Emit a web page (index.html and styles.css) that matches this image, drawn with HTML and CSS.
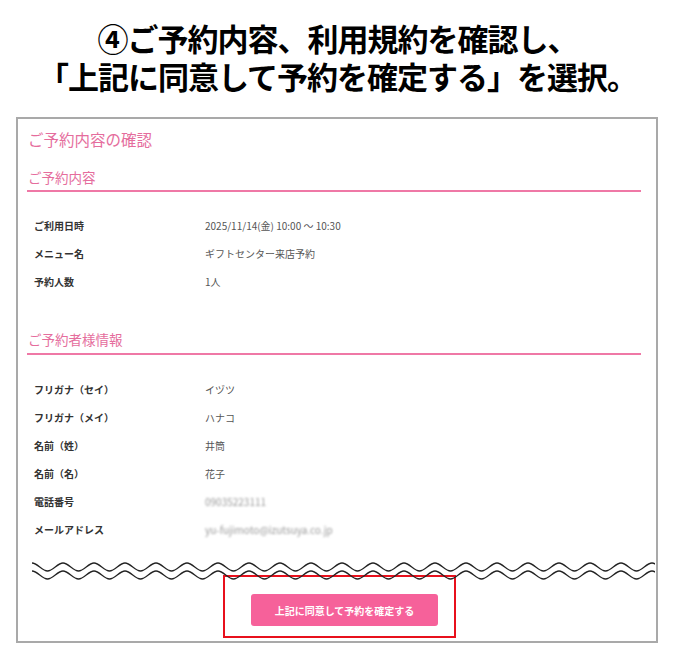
FILE: index.html
```html
<!DOCTYPE html>
<html lang="ja">
<head>
  <meta charset="UTF-8">
  <title>ご予約内容の確認</title>
  <link rel="stylesheet" href="styles.css">
</head>
<body>
  <h1 class="title">④ご予約内容、利用規約を確認し、<br>「上記に同意して予約を確定する」を選択。</h1>

  <div class="shot">
    <h2 class="page-title">ご予約内容の確認</h2>

    <section class="block">
      <h3 class="block-title">ご予約内容</h3>
      <dl class="rows">
        <div class="row"><dt>ご利用日時</dt><dd>2025/11/14(金) 10:00 ～ 10:30</dd></div>
        <div class="row"><dt>メニュー名</dt><dd>ギフトセンター来店予約</dd></div>
        <div class="row"><dt>予約人数</dt><dd>1人</dd></div>
      </dl>
    </section>

    <section class="block second">
      <h3 class="block-title">ご予約者様情報</h3>
      <dl class="rows">
        <div class="row"><dt>フリガナ（セイ）</dt><dd>イヅツ</dd></div>
        <div class="row"><dt>フリガナ（メイ）</dt><dd>ハナコ</dd></div>
        <div class="row"><dt>名前（姓）</dt><dd>井筒</dd></div>
        <div class="row"><dt>名前（名）</dt><dd>花子</dd></div>
        <div class="row"><dt>電話番号</dt><dd class="blur">09035223111</dd></div>
        <div class="row"><dt>メールアドレス</dt><dd class="blur">yu-fujimoto@izutsuya.co.jp</dd></div>
      </dl>
    </section>

    <div class="cut">
      <svg width="623" height="18" viewBox="0 0 623 18">
        <defs>
          <pattern id="wave" width="31" height="18" patternUnits="userSpaceOnUse">
            <path d="M0 1 C5.5 1 10 9 15.5 9 S25.5 1 31 1" fill="none" stroke="#222" stroke-width="1.3"/>
            <path d="M0 9 C5.5 9 10 17 15.5 17 S25.5 9 31 9" fill="none" stroke="#222" stroke-width="1.3"/>
          </pattern>
        </defs>
        <rect width="623" height="18" fill="url(#wave)"/>
      </svg>
    </div>

    <div class="highlight">
      <button class="confirm">上記に同意して予約を確定する</button>
    </div>
  </div>
</body>
</html>
```

FILE: styles.css
```css
body { margin: 0; background: #fff; font-family: "Noto Sans CJK JP", "Noto Sans", sans-serif; color: #333; }
.title { margin: 0; padding-top: 19px; font-size: 31px; line-height: 38px; font-weight: 700; letter-spacing: -1px; text-align: center; color: #000; }

.shot { margin: 22px 17px 0 16px; border: 2px solid #a9a9a9; }
.page-title { margin: 0; padding: 10px 0 0 10px; font-size: 15.5px; line-height: 20px; font-weight: 400; color: #e56d9d; }

.block { margin: 18px 15px 0 9px; }
.block.second { margin-top: 34px; }
.block-title { margin: 0; padding: 0 0 3px 1px; font-size: 13.5px; line-height: 20px; font-weight: 400; color: #e56d9d; border-bottom: 2px solid #ef78a6; }
.block.second .block-title { padding-bottom: 4px; }

.rows { margin: 19px 0 0 7px; }
.block.second .rows { margin-top: 20px; }
.row { display: flex; align-items: center; height: 28px; font-size: 10px; }
.row dt { width: 171px; font-weight: 700; color: #333; }
.row dd { margin: 0; color: #555; }
.row dd.blur { color: #999; filter: blur(1.2px); }

.cut { margin-top: 19px; padding-left: 14px; height: 18px; }
.cut svg { display: block; }

.highlight { margin: -5px 0 3px 205px; width: 187px; padding: 17px 16px 10px 26px; border: 2px solid #e8101c; }
.confirm { display: block; width: 187px; height: 32px; border: none; border-radius: 3px; background: #f6619a; color: #fff; font-family: inherit; font-size: 10px; font-weight: 700; cursor: pointer; }
```
